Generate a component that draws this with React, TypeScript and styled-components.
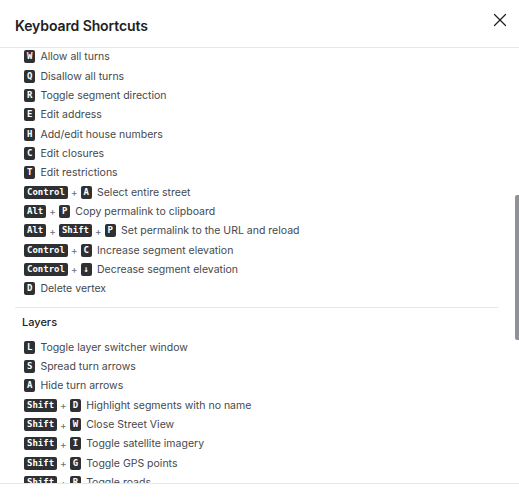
import { Fragment } from "react";
import styled, { createGlobalStyle } from "styled-components";
import { X } from "lucide-react";

const GlobalStyle = createGlobalStyle`
  html, body {
    margin: 0;
    padding: 0;
    background: #ffffff;
    overflow: hidden;
  }
  * {
    box-sizing: border-box;
  }
`;

const Modal = styled.div`
  width: 519px;
  height: 500px;
  display: flex;
  flex-direction: column;
  background: #ffffff;
  font-family: Inter, "Noto Sans", sans-serif;
  color: #45484c;
`;

const Header = styled.div`
  height: 48px;
  flex-shrink: 0;
  display: flex;
  justify-content: space-between;
  align-items: flex-start;
  padding: 0 8px 0 15px;
  border-bottom: 1px solid #e6e7e9;
`;

const Title = styled.h2`
  margin: 17px 0 0;
  font-size: 14px;
  font-weight: 600;
  color: #202124;
  letter-spacing: -0.1px;
`;

const CloseButton = styled.button`
  margin-top: 9px;
  padding: 0;
  border: none;
  background: none;
  color: #202124;
  display: flex;
  cursor: pointer;
`;

const Body = styled.div`
  flex: 1;
  position: relative;
  overflow: hidden;
`;

const Content = styled.div`
  margin-top: -1px;
  padding: 0 21px 0 15px;
`;

const Section = styled.div<{ $divider?: boolean }>`
  padding-bottom: 9px;
  border-bottom: ${(p) => (p.$divider ? "1px solid #e6e7e9" : "none")};
`;

const SectionTitle = styled.h3`
  margin: 8px 0 8px 7px;
  font-size: 11px;
  line-height: 13px;
  font-weight: 500;
  color: #202124;
`;

const Row = styled.div`
  height: 19.35px;
  display: flex;
  align-items: center;
  padding-left: 9px;
  font-size: 10.5px;
  white-space: nowrap;
`;

const Keys = styled.span`
  display: flex;
  align-items: center;
  gap: 3px;
  margin-right: 5px;
`;

const Key = styled.kbd`
  display: inline-block;
  height: 13px;
  padding: 0 3px;
  border-radius: 2px;
  background: #2f3033;
  color: #ffffff;
  font-family: "DejaVu Sans Mono", "Liberation Mono", monospace;
  font-weight: bold;
  font-size: 9px;
  line-height: 13px;
`;

const Plus = styled.span`
  color: #6b6e72;
  font-size: 10px;
`;

const Thumb = styled.div`
  position: absolute;
  top: 147px;
  right: 0;
  width: 4px;
  height: 145px;
  border-radius: 2px 0 0 2px;
  background: #8f9398;
`;

const Footer = styled.div`
  height: 17px;
  flex-shrink: 0;
  border-top: 1px solid #e6e7e9;
  background: #ffffff;
`;

type Shortcut = { keys: string[]; label: string };

const editing: Shortcut[] = [
  { keys: ["W"], label: "Allow all turns" },
  { keys: ["Q"], label: "Disallow all turns" },
  { keys: ["R"], label: "Toggle segment direction" },
  { keys: ["E"], label: "Edit address" },
  { keys: ["H"], label: "Add/edit house numbers" },
  { keys: ["C"], label: "Edit closures" },
  { keys: ["T"], label: "Edit restrictions" },
  { keys: ["Control", "A"], label: "Select entire street" },
  { keys: ["Alt", "P"], label: "Copy permalink to clipboard" },
  { keys: ["Alt", "Shift", "P"], label: "Set permalink to the URL and reload" },
  { keys: ["Control", "C"], label: "Increase segment elevation" },
  { keys: ["Control", "↓"], label: "Decrease segment elevation" },
  { keys: ["D"], label: "Delete vertex" },
];

const layers: Shortcut[] = [
  { keys: ["L"], label: "Toggle layer switcher window" },
  { keys: ["S"], label: "Spread turn arrows" },
  { keys: ["A"], label: "Hide turn arrows" },
  { keys: ["Shift", "D"], label: "Highlight segments with no name" },
  { keys: ["Shift", "W"], label: "Close Street View" },
  { keys: ["Shift", "I"], label: "Toggle satellite imagery" },
  { keys: ["Shift", "G"], label: "Toggle GPS points" },
  { keys: ["Shift", "R"], label: "Toggle roads" },
];

function ShortcutRow({ keys, label }: Shortcut) {
  return (
    <Row>
      <Keys>
        {keys.map((k, i) => (
          <Fragment key={k + i}>
            {i > 0 && <Plus>+</Plus>}
            <Key>{k}</Key>
          </Fragment>
        ))}
      </Keys>
      {label}
    </Row>
  );
}

function App() {
  return (
    <>
      <GlobalStyle />
      <Modal>
        <Header>
          <Title>Keyboard Shortcuts</Title>
          <CloseButton aria-label="Close">
            <X size={22} strokeWidth={1.4} />
          </CloseButton>
        </Header>
        <Body>
          <Content>
            <Section $divider>
              {editing.map((s) => (
                <ShortcutRow key={s.label} {...s} />
              ))}
            </Section>
            <Section>
              <SectionTitle>Layers</SectionTitle>
              {layers.map((s) => (
                <ShortcutRow key={s.label} {...s} />
              ))}
            </Section>
          </Content>
          <Thumb />
        </Body>
        <Footer />
      </Modal>
    </>
  );
}

export default App;
